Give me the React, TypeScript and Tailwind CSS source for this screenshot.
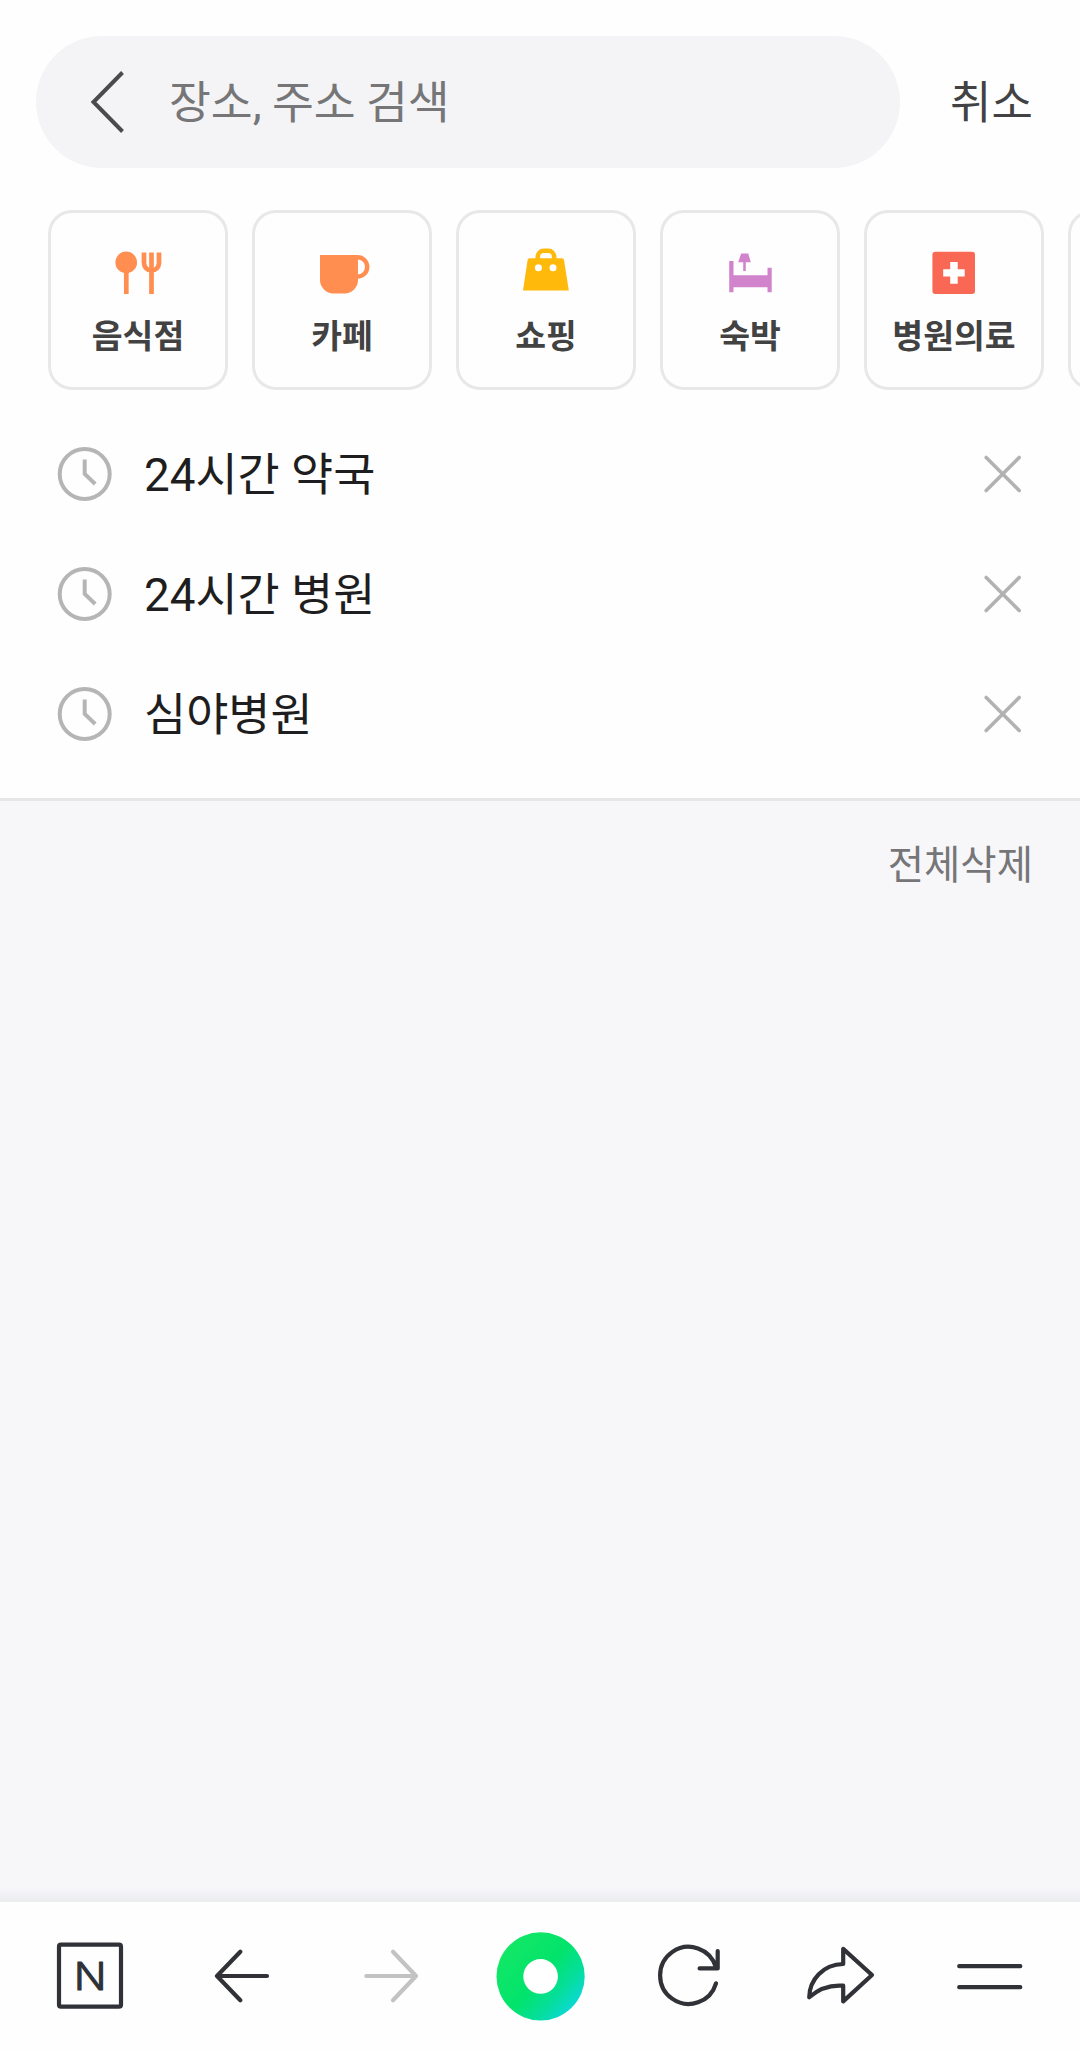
import type { ReactNode } from "react";

interface Category {
  name: string;
  icon: ReactNode;
}

const categories: Category[] = [
  {
    name: "음식점",
    icon: (
      <g fill="none" stroke="#ff8e50">
        <circle cx="18.2" cy="22.4" r="10.8" fill="#ff8e50" stroke="none" />
        <path d="M18.3 30V54M43.5 12.5V54M36 12.5V23a7.5 7.5 0 0 0 15 0V12.5" strokeWidth="4.7" />
      </g>
    ),
  },
  {
    name: "카페",
    icon: (
      <g>
        <path d="M8 15h38v25a13.5 13.5 0 0 1-13.5 13.5h-11A13.5 13.5 0 0 1 8 40z" fill="#ff8e50" />
        <path d="M45.5 17.2a9.7 9.7 0 0 1 0 19.4" fill="none" stroke="#ff8e50" strokeWidth="4.4" />
      </g>
    ),
  },
  {
    name: "쇼핑",
    icon: (
      <g>
        <path d="M13.5 18.3h32.5a2 2 0 0 1 2 1.6L52.8 50.6H7L11.6 20a2 2 0 0 1 1.9-1.7z" fill="#ffb90a" />
        <path d="M21.8 21v-4.2a6 6 0 0 1 6-6h4.4a6 6 0 0 1 6 6V21" fill="none" stroke="#ffb90a" strokeWidth="4.6" />
        <circle cx="22.4" cy="27.7" r="3.5" fill="#fff" />
        <circle cx="37" cy="27.7" r="3.5" fill="#fff" />
      </g>
    ),
  },
  {
    name: "숙박",
    icon: (
      <g fill="#d183cc">
        <path d="M9.2 21h4.3v14.2h34V27.7h4.2v24.5h-4.2v-5h-34v5H9.2z" />
        <path d="M21.2 13.4h7l2.6 8.8h-5V31h-2.6v-8.8h-5z" />
      </g>
    ),
  },
  {
    name: "병원의료",
    icon: (
      <g>
        <rect x="8.4" y="11.8" width="42.6" height="42.2" rx="3" fill="#f96854" />
        <path d="M26.2 22h7.5v7.2h7v7.2h-7v7.3h-7.5v-7.3h-7v-7.2h7z" fill="#fff" />
      </g>
    ),
  },
  { name: "", icon: null },
];

const recentSearches = ["24시간 약국", "24시간 병원", "심야병원"];

const navItems: Category[] = [
  {
    name: "home",
    icon: (
      <>
        <rect x="14" y="13.7" width="62" height="62" rx="2" />
        <text
          transform="translate(45.2 58.9) scale(1.14 1)"
          textAnchor="middle"
          className="font-['Inter'] text-[38px] font-light"
          fill="#2d3139"
          strokeWidth="1"
        >
          N
        </text>
      </>
    ),
  },
  { name: "back", icon: <path d="M72 45H22.5M45.3 20.8 22 45l23.3 24.2" /> },
  { name: "forward", icon: <path d="M21.3 45H70.5M48 20.8 71 45 48 69.2" stroke="#c3c3c4" /> },
  {
    name: "green dot",
    icon: (
      <>
        <defs>
          <linearGradient id="dot" x1="0.1" y1="0.2" x2="0.86" y2="0.86">
            <stop offset="0" stopColor="#12e766" />
            <stop offset="0.5" stopColor="#02e36c" />
            <stop offset="0.78" stopColor="#05de9c" />
            <stop offset="1" stopColor="#0bd8d4" />
          </linearGradient>
        </defs>
        <circle cx="45.6" cy="45.4" r="44.1" fill="url(#dot)" stroke="none" />
        <circle cx="45.6" cy="45.4" r="17.3" fill="#fff" stroke="none" />
      </>
    ),
  },
  { name: "reload", icon: <path d="M71 52.3A28.5 28.5 0 1 1 71 36.5M72.7 20V37.4H54.6" /> },
  {
    name: "share",
    icon: <path d="M48.2 17.9V33C28 33.5 14.5 48.5 14.2 66.3 24 57.5 34 53.6 48.2 54.7V70.4L77 44z" />,
  },
  { name: "menu", icon: <path d="M14.2 35.2H75.3M14.2 56.2H75.3" /> },
];

function SearchHeader() {
  return (
    <header className="flex items-center pl-9 pt-9">
      <div className="flex h-[132px] w-[864px] items-center rounded-full bg-[#f4f4f6] pl-[54px]">
        <svg className="h-[64px] w-[36px]" viewBox="0 0 36 64" fill="none" stroke="#4b4b4d" strokeWidth="4">
          <path d="M32.5 2.5 3.5 32l29 29.5" />
        </svg>
        <span className="ml-[43px] pt-[4px] text-[45.5px] leading-[60px] text-[#767678] [word-spacing:-1px]">
          장소, 주소 검색
        </span>
      </div>
      <button className="ml-[50px] pt-[4px] text-[45px] leading-[60px] text-[#424244]">취소</button>
    </header>
  );
}

function CategoryCard({ name, icon }: Category) {
  return (
    <div className="flex h-[180px] w-[180px] shrink-0 flex-col items-center rounded-[24px] border-[3px] border-[#e8e8e8] pt-[27px]">
      <svg className="h-[60px] w-[60px]" viewBox="0 0 60 60">
        {icon}
      </svg>
      <span className="mt-[17px] text-[33.5px] font-bold leading-[40px] text-[#424242]">{name}</span>
    </div>
  );
}

function RecentRow({ text }: { text: string }) {
  return (
    <li className="flex h-[120px] items-center pl-[57px] pr-[57px]">
      <svg className="h-14 w-14" viewBox="0 0 56 56" fill="none" stroke="#b5b5b5" strokeWidth="4">
        <circle cx="27.7" cy="28" r="25" />
        <path d="M27.7 13.5V28l10.5 10" />
      </svg>
      <span className="ml-[31px] flex-1 pt-[4px] text-[45.8px] leading-[60px] text-[#1e1e20]">{text}</span>
      <svg className="h-10 w-10" viewBox="0 0 40 40" fill="none" stroke="#b2b2b2" strokeWidth="3.6" strokeLinecap="round">
        <path d="M3.2 3.5 36.2 36.5M36.2 3.5 3.2 36.5" />
      </svg>
    </li>
  );
}

export default function App() {
  return (
    <div className="flex h-[2051px] w-[1080px] flex-col overflow-hidden bg-[#f7f7fa] font-['Roboto','Noto_Sans_CJK_KR',sans-serif]">
      <div className="border-b-[3px] border-[#e5e6e8] bg-[#fefefe]">
        <SearchHeader />
        <div className="mt-[42px] flex gap-6 overflow-hidden pl-12">
          {categories.map((category, i) => (
            <CategoryCard key={i} {...category} />
          ))}
        </div>
        <ul className="pb-6 pt-6">
          {recentSearches.map((text) => (
            <RecentRow key={text} text={text} />
          ))}
        </ul>
      </div>

      <div className="flex flex-1 items-start justify-end pr-[47px] pt-[35px]">
        <button className="text-[39.5px] leading-[60px] text-[#767678]">전체삭제</button>
      </div>

      {/* Soft edge above the toolbar */}
      <div className="h-3 bg-gradient-to-b from-[#f5f5f8] to-[#eaecee]" />
      <nav className="flex h-[149px] bg-[#fefefe] px-[15px] pt-[29px]">
        {navItems.map((item) => (
          <button key={item.name} aria-label={item.name} className="flex w-[150px] justify-center">
            <svg
              className="h-[90px] w-[90px]"
              viewBox="0 0 90 90"
              fill="none"
              stroke="#303238"
              strokeWidth="4.2"
              strokeLinecap="round"
              strokeLinejoin="round"
            >
              {item.icon}
            </svg>
          </button>
        ))}
      </nav>
    </div>
  );
}
